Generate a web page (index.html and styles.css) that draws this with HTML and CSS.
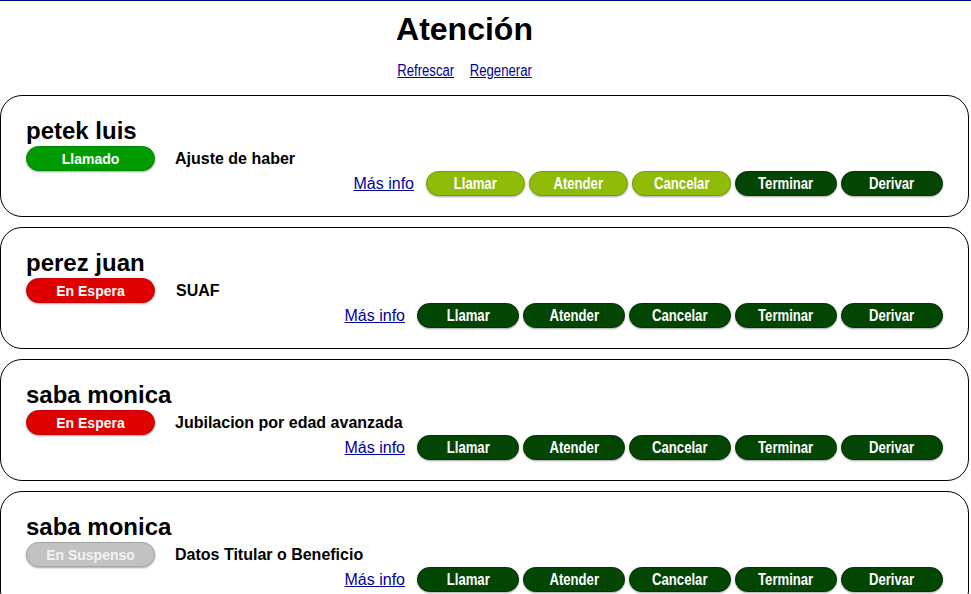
FILE: index.html
```html
<!DOCTYPE html>
<html lang="es">
<head>
<meta charset="utf-8">
<title>Atención</title>
<link rel="stylesheet" href="styles.css">
</head>
<body>
<header class="header">
  <h1 class="title">Atención</h1>
  <nav class="links">
    <a href="#" class="top-link">Refrescar</a>
    <a href="#" class="top-link">Regenerar</a>
  </nav>
</header>
<main class="list">
  <section class="card">
    <h2 class="name">petek luis</h2>
    <div class="status-row">
      <span class="badge badge-called">Llamado</span>
      <span class="subject">Ajuste de haber</span>
    </div>
    <div class="actions">
      <a href="#" class="more">Más info</a>
      <button class="btn btn-light"><span class="btn-label">Llamar</span></button>
      <button class="btn btn-light"><span class="btn-label">Atender</span></button>
      <button class="btn btn-light"><span class="btn-label">Cancelar</span></button>
      <button class="btn btn-dark"><span class="btn-label">Terminar</span></button>
      <button class="btn btn-dark"><span class="btn-label">Derivar</span></button>
    </div>
  </section>
  <section class="card">
    <h2 class="name">perez juan</h2>
    <div class="status-row">
      <span class="badge badge-wait">En Espera</span>
      <span class="subject subject-b">SUAF</span>
    </div>
    <div class="actions">
      <a href="#" class="more">Más info</a>
      <button class="btn btn-dark"><span class="btn-label">Llamar</span></button>
      <button class="btn btn-dark"><span class="btn-label">Atender</span></button>
      <button class="btn btn-dark"><span class="btn-label">Cancelar</span></button>
      <button class="btn btn-dark"><span class="btn-label">Terminar</span></button>
      <button class="btn btn-dark"><span class="btn-label">Derivar</span></button>
    </div>
  </section>
  <section class="card">
    <h2 class="name">saba monica</h2>
    <div class="status-row">
      <span class="badge badge-wait">En Espera</span>
      <span class="subject">Jubilacion por edad avanzada</span>
    </div>
    <div class="actions">
      <a href="#" class="more">Más info</a>
      <button class="btn btn-dark"><span class="btn-label">Llamar</span></button>
      <button class="btn btn-dark"><span class="btn-label">Atender</span></button>
      <button class="btn btn-dark"><span class="btn-label">Cancelar</span></button>
      <button class="btn btn-dark"><span class="btn-label">Terminar</span></button>
      <button class="btn btn-dark"><span class="btn-label">Derivar</span></button>
    </div>
  </section>
  <section class="card">
    <h2 class="name">saba monica</h2>
    <div class="status-row">
      <span class="badge badge-hold">En Suspenso</span>
      <span class="subject">Datos Titular o Beneficio</span>
    </div>
    <div class="actions">
      <a href="#" class="more">Más info</a>
      <button class="btn btn-dark"><span class="btn-label">Llamar</span></button>
      <button class="btn btn-dark"><span class="btn-label">Atender</span></button>
      <button class="btn btn-dark"><span class="btn-label">Cancelar</span></button>
      <button class="btn btn-dark"><span class="btn-label">Terminar</span></button>
      <button class="btn btn-dark"><span class="btn-label">Derivar</span></button>
    </div>
  </section>
</main>
</body>
</html>
```
FILE: styles.css
```css
html, body {
  margin: 0;
  padding: 0;
  background: #ffffff;
}
body {
  border-top: 1px solid #000080;
  font-family: "Liberation Sans", Arial, sans-serif;
  color: #000;
}
.header {
  padding-top: 10px;
  padding-right: 42px;
  text-align: center;
}
.title {
  margin: 0;
  font-size: 32px;
  line-height: 37px;
  font-weight: bold;
}
.links {
  margin-top: 14px;
  display: flex;
  justify-content: center;
  gap: 3px;
  font-size: 16px;
  line-height: 17px;
}
.top-link {
  display: inline-block;
  color: #000099;
  transform: scaleX(0.82);
}
.list {
  margin-top: 16px;
}
.card {
  margin: 0 2px 10px 0;
  border: 1px solid #000;
  border-radius: 22px;
  padding: 21px 25px 20px 25px;
  height: 79px;
  overflow: hidden;
}
.name {
  margin: 0;
  font-size: 24px;
  line-height: 28px;
  font-weight: bold;
}
.status-row {
  margin-top: 1px;
  display: flex;
  align-items: center;
  height: 25px;
}
.badge {
  box-sizing: border-box;
  width: 129px;
  height: 25px;
  border-radius: 13px;
  display: flex;
  align-items: center;
  justify-content: center;
  font-size: 14px;
  font-weight: bold;
  color: #fff;
  box-shadow: 0 1px 2px rgba(0,0,0,0.35);
}
.badge-called {
  background: #009b00;
  border: 1px solid #008a00;
}
.badge-wait {
  background: #e00000;
  border: 1px solid #c80000;
}
.badge-hold {
  background: #c2c2c2;
  border: 1px solid #a6a6a6;
  color: #f2f2f2;
}
.subject {
  margin-left: 20px;
  font-size: 16px;
  font-weight: bold;
}
.subject-b {
  margin-left: 21px;
}
.actions {
  display: flex;
  justify-content: flex-end;
  align-items: center;
  height: 25px;
  gap: 4px;
}
.more {
  margin-right: 8px;
  font-size: 16px;
  color: #0000a0;
}
.btn {
  box-sizing: border-box;
  height: 25px;
  width: 102px;
  padding: 0;
  border-radius: 13px;
  font-family: "Liberation Sans", Arial, sans-serif;
  font-size: 16px;
  line-height: 18px;
  font-weight: bold;
  color: #fff;
  cursor: pointer;
  box-shadow: 0 1px 2px rgba(0,0,0,0.35);
}
.btn-label {
  display: inline-block;
  transform: scaleX(0.82);
}
.btn-light {
  width: 99px;
  background: #8fbc08;
  border: 1px solid #79a000;
}
.btn-dark {
  background: #034503;
  border: 1px solid #023302;
}
```
